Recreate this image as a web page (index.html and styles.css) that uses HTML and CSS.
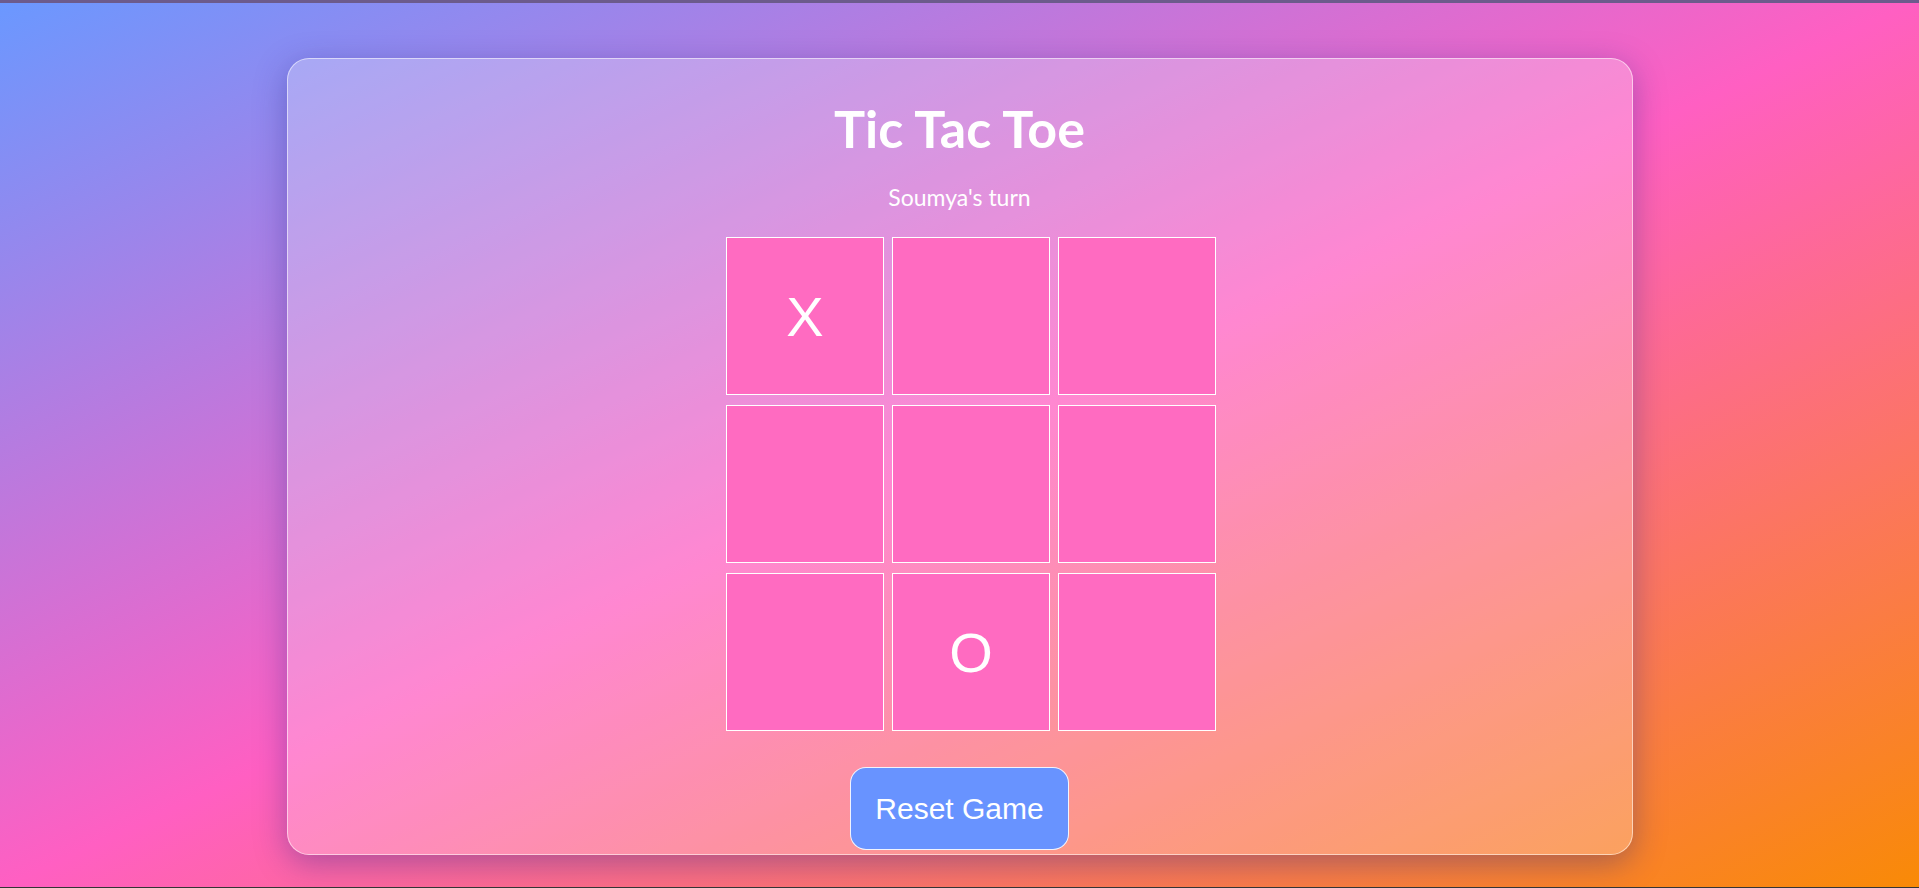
FILE: index.html
```html
<!DOCTYPE html>
<html lang="en">
<head>
<meta charset="utf-8">
<title>Tic Tac Toe</title>
<link rel="stylesheet" href="styles.css">
</head>
<body>
<main class="page">
  <section class="card">
    <h1 class="title">Tic Tac Toe</h1>
    <p class="status">Soumya's turn</p>
    <div class="board">
      <button class="cell">X</button>
      <button class="cell"></button>
      <button class="cell"></button>
      <button class="cell"></button>
      <button class="cell"></button>
      <button class="cell"></button>
      <button class="cell"></button>
      <button class="cell">O</button>
      <button class="cell"></button>
    </div>
    <button class="reset">Reset Game</button>
  </section>
</main>
</body>
</html>
```
FILE: styles.css
```css
html, body {
  margin: 0;
  padding: 0;
}

body {
  box-sizing: border-box;
  height: 888px;
  overflow: hidden;
  border-top: 3px solid #6c5b8c;
  border-bottom: 1px solid #353535;
  background: linear-gradient(to bottom right, #6a98ff 0%, #ff5fc2 50%, #f98a06 100%);
  font-family: "Lato", "Open Sans", sans-serif;
  color: #fff;
}

.page {
  display: flex;
  justify-content: center;
  padding-top: 55px;
}

.card {
  box-sizing: border-box;
  width: 1346px;
  height: 797px;
  border: 1px solid rgba(255, 255, 255, 0.55);
  border-radius: 22px;
  background: rgba(255, 255, 255, 0.25);
  box-shadow: 0 8px 32px 0 rgba(31, 38, 135, 0.37);
  display: flex;
  flex-direction: column;
  align-items: center;
}

.title {
  margin: 39px 0 0;
  font-size: 52px;
  font-weight: 700;
  line-height: 60px;
}

.status {
  margin: 26px 0 0;
  font-size: 23px;
  line-height: 26px;
}

.board {
  margin: 27px 0 0 22px;
  display: grid;
  grid-template-columns: repeat(3, 158px);
  grid-auto-rows: 158px;
  column-gap: 8px;
  row-gap: 10px;
}

.cell {
  box-sizing: border-box;
  margin: 0;
  padding: 0 0 0 1px;
  border: 1px solid #fff;
  background: #ff6bc1;
  color: #fff;
  font-family: "Liberation Sans", Arial, sans-serif;
  font-size: 56px;
  display: flex;
  align-items: center;
  justify-content: center;
}

.reset {
  margin-top: 36px;
  padding: 23px 24px;
  border: 1px solid rgba(255, 255, 255, 0.9);
  border-radius: 16px;
  background: #6893ff;
  color: #fff;
  font-family: "Liberation Sans", Arial, sans-serif;
  font-size: 30px;
  line-height: 35px;
}
```
